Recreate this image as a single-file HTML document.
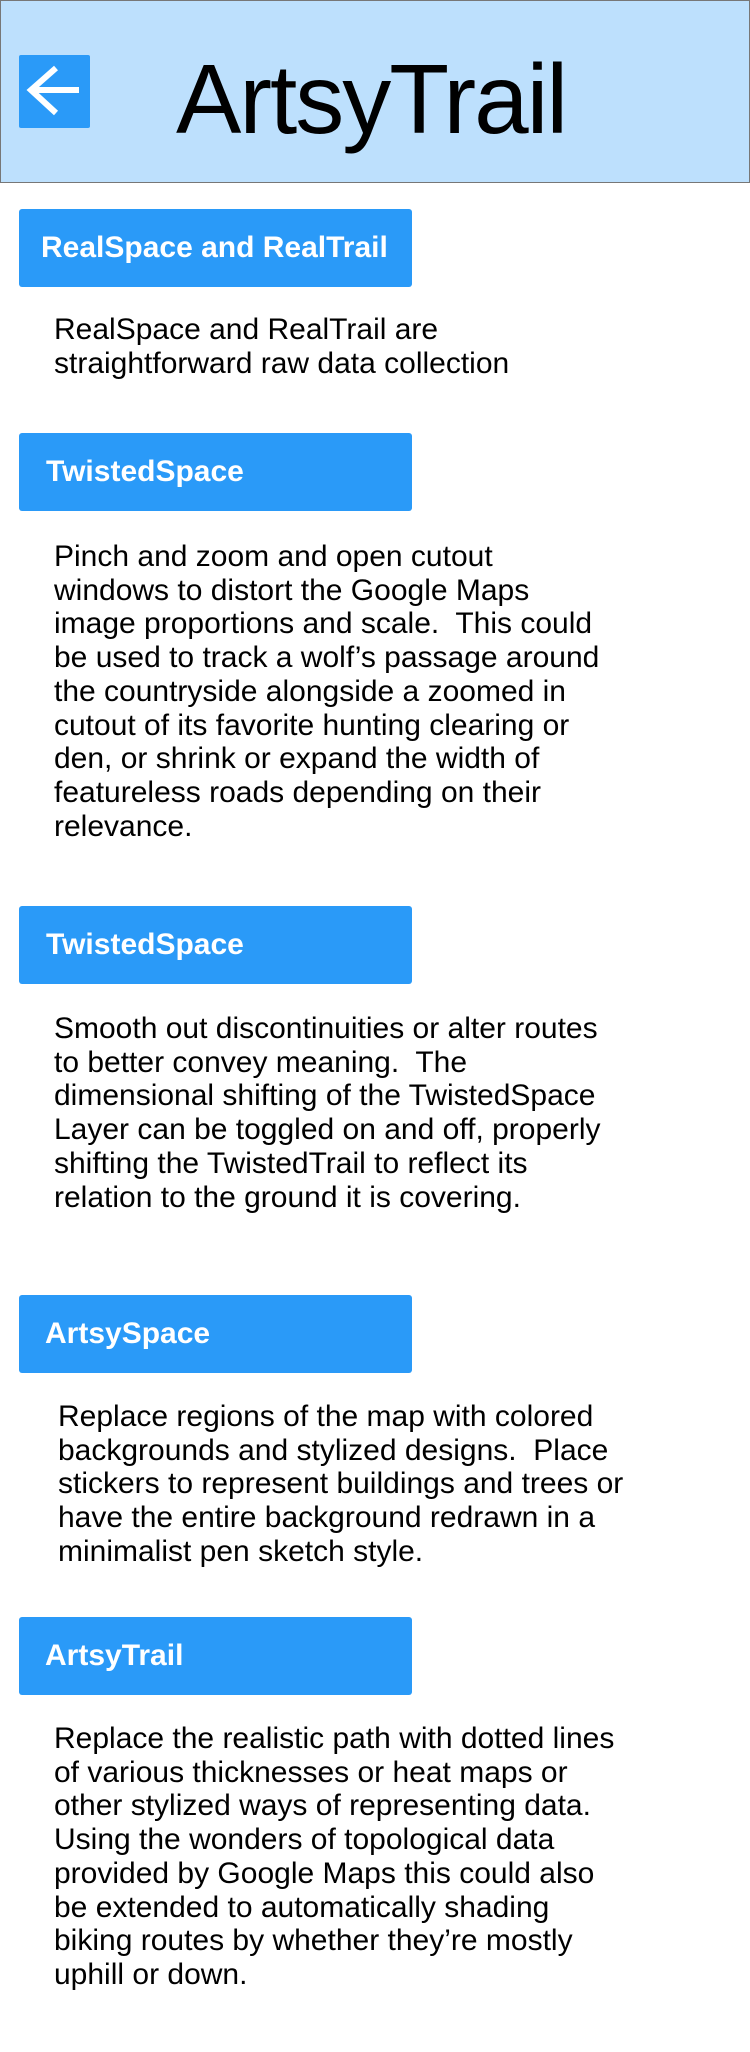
<!DOCTYPE html>
<html><head><meta charset="utf-8"><style>
html,body{margin:0;padding:0;background:#fff;}
body{width:750px;height:2052px;position:relative;overflow:hidden;font-family:"Liberation Sans",Arial,sans-serif;}
.hdr{position:absolute;left:0;top:0;width:748px;height:181px;background:#bde0fd;border:1px solid #777;}
.back{position:absolute;left:19px;top:55px;width:71px;height:73px;background:#2a9af8;border-radius:2px;}
.title{position:absolute;left:176px;top:50px;font-size:98px;line-height:98px;letter-spacing:-2px;color:#000;white-space:nowrap;}
.btn{position:absolute;left:19px;width:393px;height:78px;background:#2a9af8;border-radius:3px;color:#fff;font-weight:bold;font-size:30px;line-height:78px;white-space:nowrap;}
.p{position:absolute;left:54px;font-size:30px;line-height:33.7px;color:#000;white-space:nowrap;letter-spacing:0;}
</style></head><body>
<div class="hdr"></div>
<div class="back"><svg width="71" height="73" viewBox="0 0 71 73"><path d="M12 35 H60 M37 13 L12 35 L37 58" fill="none" stroke="#fff" stroke-width="6" stroke-linejoin="miter"/></svg></div>
<div class="title">ArtsyTrail</div>

<div class="btn" style="top:209px;padding-left:22px;width:371px;">RealSpace and RealTrail</div>
<div class="p" style="top:313px;">RealSpace and RealTrail are<br>straightforward raw data collection</div>

<div class="btn" style="top:433px;padding-left:27px;width:366px;">TwistedSpace</div>
<div class="p" style="top:540px;">Pinch and zoom and open cutout<br>windows to distort the Google Maps<br>image proportions and scale.&nbsp; This could<br>be used to track a wolf’s passage around<br>the countryside alongside a zoomed in<br>cutout of its favorite hunting clearing or<br>den, or shrink or expand the width of<br>featureless roads depending on their<br>relevance.</div>

<div class="btn" style="top:906px;padding-left:27px;width:366px;">TwistedSpace</div>
<div class="p" style="top:1012px;">Smooth out discontinuities or alter routes<br>to better convey meaning.&nbsp; The<br>dimensional shifting of the TwistedSpace<br>Layer can be toggled on and off, properly<br>shifting the TwistedTrail to reflect its<br>relation to the ground it is covering.</div>

<div class="btn" style="top:1295px;padding-left:26px;width:367px;">ArtsySpace</div>
<div class="p" style="top:1400px;left:58px;">Replace regions of the map with colored<br>backgrounds and stylized designs.&nbsp; Place<br>stickers to represent buildings and trees or<br>have the entire background redrawn in a<br>minimalist pen sketch style.</div>

<div class="btn" style="top:1617px;padding-left:26px;width:367px;">ArtsyTrail</div>
<div class="p" style="top:1722px;">Replace the realistic path with dotted lines<br>of various thicknesses or heat maps or<br>other stylized ways of representing data.<br>Using the wonders of topological data<br>provided by Google Maps this could also<br>be extended to automatically shading<br>biking routes by whether they’re mostly<br>uphill or down.</div>
</body></html>
